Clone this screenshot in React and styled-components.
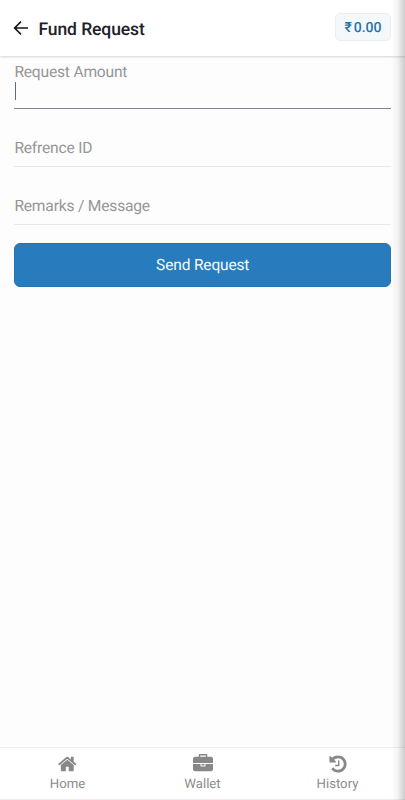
import React from 'react';
import styled, { createGlobalStyle } from 'styled-components';

const GlobalStyle = createGlobalStyle`
  * {
    box-sizing: border-box;
  }
  body {
    margin: 0;
    background: #fdfdfd;
    font-family: Roboto, "Noto Sans", sans-serif;
    text-rendering: geometricPrecision;
  }
`;

const Screen = styled.div`
  position: relative;
  width: 405px;
  height: 800px;
  display: flex;
  flex-direction: column;
  overflow: hidden;
  background: #fdfdfd;
`;

/* soft shadow along the right side of the screen */
const EdgeShade = styled.div`
  position: absolute;
  top: 0;
  right: 0;
  width: 14px;
  height: 100%;
  z-index: 2;
  pointer-events: none;
  background: linear-gradient(to right, rgba(0, 0, 0, 0), rgba(0, 0, 0, 0.04) 45%, rgba(0, 0, 0, 0.2));
`;

const Header = styled.header`
  height: 56px;
  flex: none;
  display: flex;
  align-items: center;
  padding: 0 14px 1px 13px;
  background: #fff;
  box-shadow: 0 1px 2px rgba(0, 0, 0, 0.16);
`;

const BackButton = styled.button`
  width: 16px;
  height: 16px;
  padding: 0;
  border: 0;
  background: none;
  display: flex;
  color: #15151c;
`;

const Title = styled.h1`
  flex: 1;
  margin: 4px 0 0 9.5px;
  font-size: 17.5px;
  line-height: 24px;
  font-weight: 500;
  letter-spacing: -0.1px;
  color: #20202a;
`;

const Balance = styled.div`
  width: 56px;
  height: 28px;
  margin-bottom: 1px;
  padding-top: 1px;
  display: flex;
  align-items: center;
  justify-content: center;
  gap: 2px;
  border: 1px solid #e8eef1;
  border-radius: 5px;
  background: #f4f8fa;
  color: #2473a8;
  font-size: 14px;
  font-weight: 500;
`;

const Form = styled.form`
  flex: 1;
  display: flex;
  flex-direction: column;
  padding: 6px 14px 0 14.4px;
`;

const Field = styled.label`
  height: ${({ $height }) => $height}px;
  display: flex;
  flex-direction: column;
  justify-content: ${({ $active }) => ($active ? 'flex-start' : 'flex-end')};
  padding-bottom: ${({ $active }) => ($active ? 0 : 8)}px;
  border-bottom: 1px solid ${({ $active }) => ($active ? '#85858f' : '#e9e9e9')};
  color: #969696;
  font-size: 15.6px;
  line-height: 20px;
  letter-spacing: -0.2px;
`;

const Caret = styled.span`
  width: 1px;
  height: 18px;
  margin: 0 0 0 0.5px;
  background: #606a8c;
`;

const SubmitButton = styled.button`
  height: 44px;
  margin-top: 17.5px;
  padding: 1px 0 0;
  border: 1px solid #2373b1;
  border-radius: 6px;
  background: #287bbd;
  color: #f2fbff;
  font-family: inherit;
  font-size: 15.5px;
  letter-spacing: -0.15px;
  text-rendering: inherit;
`;

const BottomNav = styled.nav`
  height: 53px;
  flex: none;
  display: grid;
  grid-template-columns: repeat(3, 1fr);
  background: #fff;
  border-top: 1px solid #f0f0f0;
  border-bottom: 1px solid #ededed;
`;

const NavItem = styled.a`
  display: flex;
  flex-direction: column;
  align-items: center;
  padding-top: 6px;
  color: #8c8c8c;
  font-size: 13.2px;
  line-height: 18px;
`;

const NavIcon = styled.svg`
  width: 20px;
  height: 20px;
  margin-bottom: 2px;
  fill: #888;
`;

const navItems = [
  {
    label: 'Home',
    path: 'M1408 992v480q0 26-19 45t-45 19h-384v-384h-256v384h-384q-26 0-45-19t-19-45v-480q0-1 .5-3t.5-3l575-474 575 474q1 2 1 6zm223-69l-62 74q-8 9-21 11h-3q-13 0-21-7l-692-577-692 577q-12 8-24 7-13-2-21-11l-62-74q-8-10-7-23.5t11-21.5l719-599q32-26 76-26t76 26l244 204v-195q0-14 9-23t23-9h192q14 0 23 9t9 23v408l219 182q10 8 11 21.5t-7 23.5z',
  },
  {
    label: 'Wallet',
    path: 'M640 256h512v-128h-512v128zm1152 640v480q0 66-47 113t-113 47h-1472q-66 0-113-47t-47-113v-480h672v160q0 26 19 45t45 19h320q26 0 45-19t19-45v-160h672zm-768 0v128h-256v-128h256zm768-480v384h-1792v-384q0-66 47-113t113-47h352v-160q0-40 28-68t68-28h576q40 0 68 28t28 68v160h352q66 0 113 47t47 113z',
  },
  {
    label: 'History',
    path: 'M1664 896q0 156-61 298t-164 245-245 164-298 61q-172 0-327-72.5t-264-204.5q-7-10-6.5-22.5t8.5-20.5l137-138q10-9 25-9 16 2 23 12 73 95 179 147t225 52q104 0 198.5-40.5t163.5-109.5 109.5-163.5 40.5-198.5-40.5-198.5-109.5-163.5-163.5-109.5-198.5-40.5q-98 0-188 35.5t-160 101.5l137 138q31 30 14 69-17 40-59 40h-448q-26 0-45-19t-19-45v-448q0-42 40-59 39-17 69 14l130 129q107-101 244.5-156.5t284.5-55.5q156 0 298 61t245 164 164 245 61 298zm-640-288v448q0 14-9 23t-23 9h-320q-14 0-23-9t-9-23v-64q0-14 9-23t23-9h224v-352q0-14 9-23t23-9h64q14 0 23 9t9 23z',
  },
];

const App = () => {
  return (
    <>
      <GlobalStyle />
      <Screen>
        <Header>
          <BackButton aria-label="Back">
            <svg width="16" height="16" viewBox="0 0 16 16" fill="none" stroke="currentColor" strokeWidth="1.6">
              <path d="M15 8H1.8M8 1.6L1.6 8L8 14.4" />
            </svg>
          </BackButton>
          <Title>Fund Request</Title>
          <Balance>
            <span>₹</span>
            <span>0.00</span>
          </Balance>
        </Header>
        <Form>
          <Field $active $height={47}>
            Request Amount
            <Caret />
          </Field>
          <Field $height={58}>Refrence ID</Field>
          <Field $height={58}>Remarks / Message</Field>
          <SubmitButton type="button">Send Request</SubmitButton>
        </Form>
        <BottomNav>
          {navItems.map((item) => (
            <NavItem key={item.label}>
              <NavIcon viewBox="0 0 1792 1792">
                <path d={item.path} />
              </NavIcon>
              {item.label}
            </NavItem>
          ))}
        </BottomNav>
        <EdgeShade />
      </Screen>
    </>
  );
};

export default App;
